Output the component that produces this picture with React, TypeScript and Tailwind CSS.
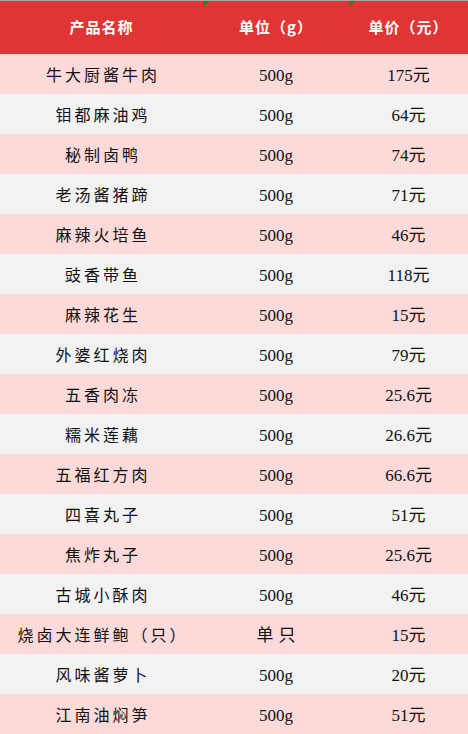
const rows: [string, string, string][] = [
  ['牛大厨酱牛肉', '500g', '175元'],
  ['钼都麻油鸡', '500g', '64元'],
  ['秘制卤鸭', '500g', '74元'],
  ['老汤酱猪蹄', '500g', '71元'],
  ['麻辣火培鱼', '500g', '46元'],
  ['豉香带鱼', '500g', '118元'],
  ['麻辣花生', '500g', '15元'],
  ['外婆红烧肉', '500g', '79元'],
  ['五香肉冻', '500g', '25.6元'],
  ['糯米莲藕', '500g', '26.6元'],
  ['五福红方肉', '500g', '66.6元'],
  ['四喜丸子', '500g', '51元'],
  ['焦炸丸子', '500g', '25.6元'],
  ['古城小酥肉', '500g', '46元'],
  ['烧卤大连鲜鲍（只）', '单只', '15元'],
  ['风味酱萝卜', '500g', '20元'],
  ['江南油焖笋', '500g', '51元'],
];

export default function App() {
  return (
    <div className="w-[468px] h-[734px] overflow-hidden bg-white font-['Liberation_Serif','Noto_Sans_CJK_SC',serif] text-[#111]">
      <div className="h-px bg-[#a6a6a6]" />
      <div className="relative grid grid-cols-[203px_146px_1fr] h-[53px] bg-[#e03535] text-white font-['Noto_Sans_CJK_SC',sans-serif] font-bold text-[15px] tracking-[1px]">
        <div className="flex items-center justify-center">产品名称</div>
        <div className="flex items-center justify-center">单位（g）</div>
        <div className="flex items-center justify-center">单价（元）</div>
        {/* cell markers */}
        <div className="absolute top-0 left-[203px] w-0 h-0 border-t-[6px] border-r-[6px] border-t-[#168a16] border-r-transparent" />
        <div className="absolute top-0 left-[349px] w-0 h-0 border-t-[6px] border-r-[6px] border-t-[#168a16] border-r-transparent" />
      </div>
      {rows.map(([name, unit, price], i) => (
        <div
          key={name}
          className={`grid grid-cols-[203px_146px_1fr] h-10 pt-[3px] items-center ${i % 2 === 0 ? 'bg-[#fcdad9]' : 'bg-[#f2f2f2]'}`}
        >
          <div className="text-center text-[16px] tracking-[3px] pl-[3px]">{name}</div>
          <div className={`text-center text-[17px] ${unit === '单只' ? 'tracking-[5px] pl-[5px] text-[16px]' : ''}`}>{unit}</div>
          <div className="text-center text-[17px]">{price}</div>
        </div>
      ))}
    </div>
  );
}
